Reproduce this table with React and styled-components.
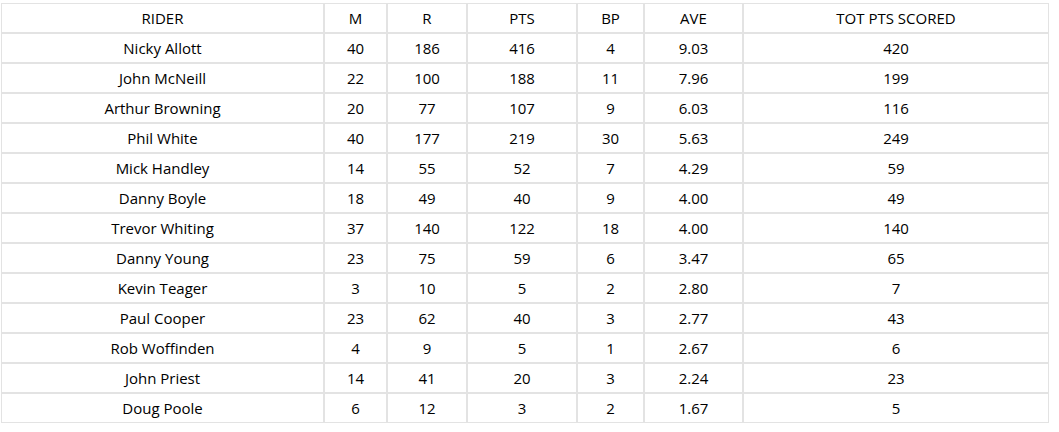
import React from 'react';
import styled, { createGlobalStyle } from 'styled-components';

const GlobalStyle = createGlobalStyle`
  body {
    margin: 0;
    background: #fff;
    font-family: 'Open Sans', 'Liberation Sans', sans-serif;
  }
`;

const Wrapper = styled.div`
  padding: 3px 0 0 1px;
`;

const Table = styled.table`
  width: 1048px;
  table-layout: fixed;
  border-collapse: separate;
  border-spacing: 0;
  color: #000;
  font-size: 15px;
`;

const Cell = styled.td`
  height: 30px;
  padding: 0 4px;
  box-sizing: border-box;
  text-align: center;
  vertical-align: middle;
  border: 1px solid #e3e3e3;
  white-space: nowrap;
  font-weight: 400;
`;

const HeadCell = styled(Cell).attrs({ as: 'th' })`
  width: ${(p) => p.$w}px;
  font-weight: 400;
`;

const columns = [
  ['RIDER', 323],
  ['M', 63],
  ['R', 80],
  ['PTS', 110],
  ['BP', 67],
  ['AVE', 99],
  ['TOT PTS SCORED', 306],
];

const riders = [
  ['Nicky Allott', 40, 186, 416, 4, '9.03', 420],
  ['John McNeill', 22, 100, 188, 11, '7.96', 199],
  ['Arthur Browning', 20, 77, 107, 9, '6.03', 116],
  ['Phil White', 40, 177, 219, 30, '5.63', 249],
  ['Mick Handley', 14, 55, 52, 7, '4.29', 59],
  ['Danny Boyle', 18, 49, 40, 9, '4.00', 49],
  ['Trevor Whiting', 37, 140, 122, 18, '4.00', 140],
  ['Danny Young', 23, 75, 59, 6, '3.47', 65],
  ['Kevin Teager', 3, 10, 5, 2, '2.80', 7],
  ['Paul Cooper', 23, 62, 40, 3, '2.77', 43],
  ['Rob Woffinden', 4, 9, 5, 1, '2.67', 6],
  ['John Priest', 14, 41, 20, 3, '2.24', 23],
  ['Doug Poole', 6, 12, 3, 2, '1.67', 5],
];

export default function App() {
  return (
    <>
      <GlobalStyle />
      <Wrapper>
        <Table>
          <thead>
            <tr>
              {columns.map(([h, w]) => (
                <HeadCell key={h} $w={w}>
                  {h}
                </HeadCell>
              ))}
            </tr>
          </thead>
          <tbody>
            {riders.map((row) => (
              <tr key={row[0]}>
                {row.map((v, i) => (
                  <Cell key={i}>{v}</Cell>
                ))}
              </tr>
            ))}
          </tbody>
        </Table>
      </Wrapper>
    </>
  );
}
